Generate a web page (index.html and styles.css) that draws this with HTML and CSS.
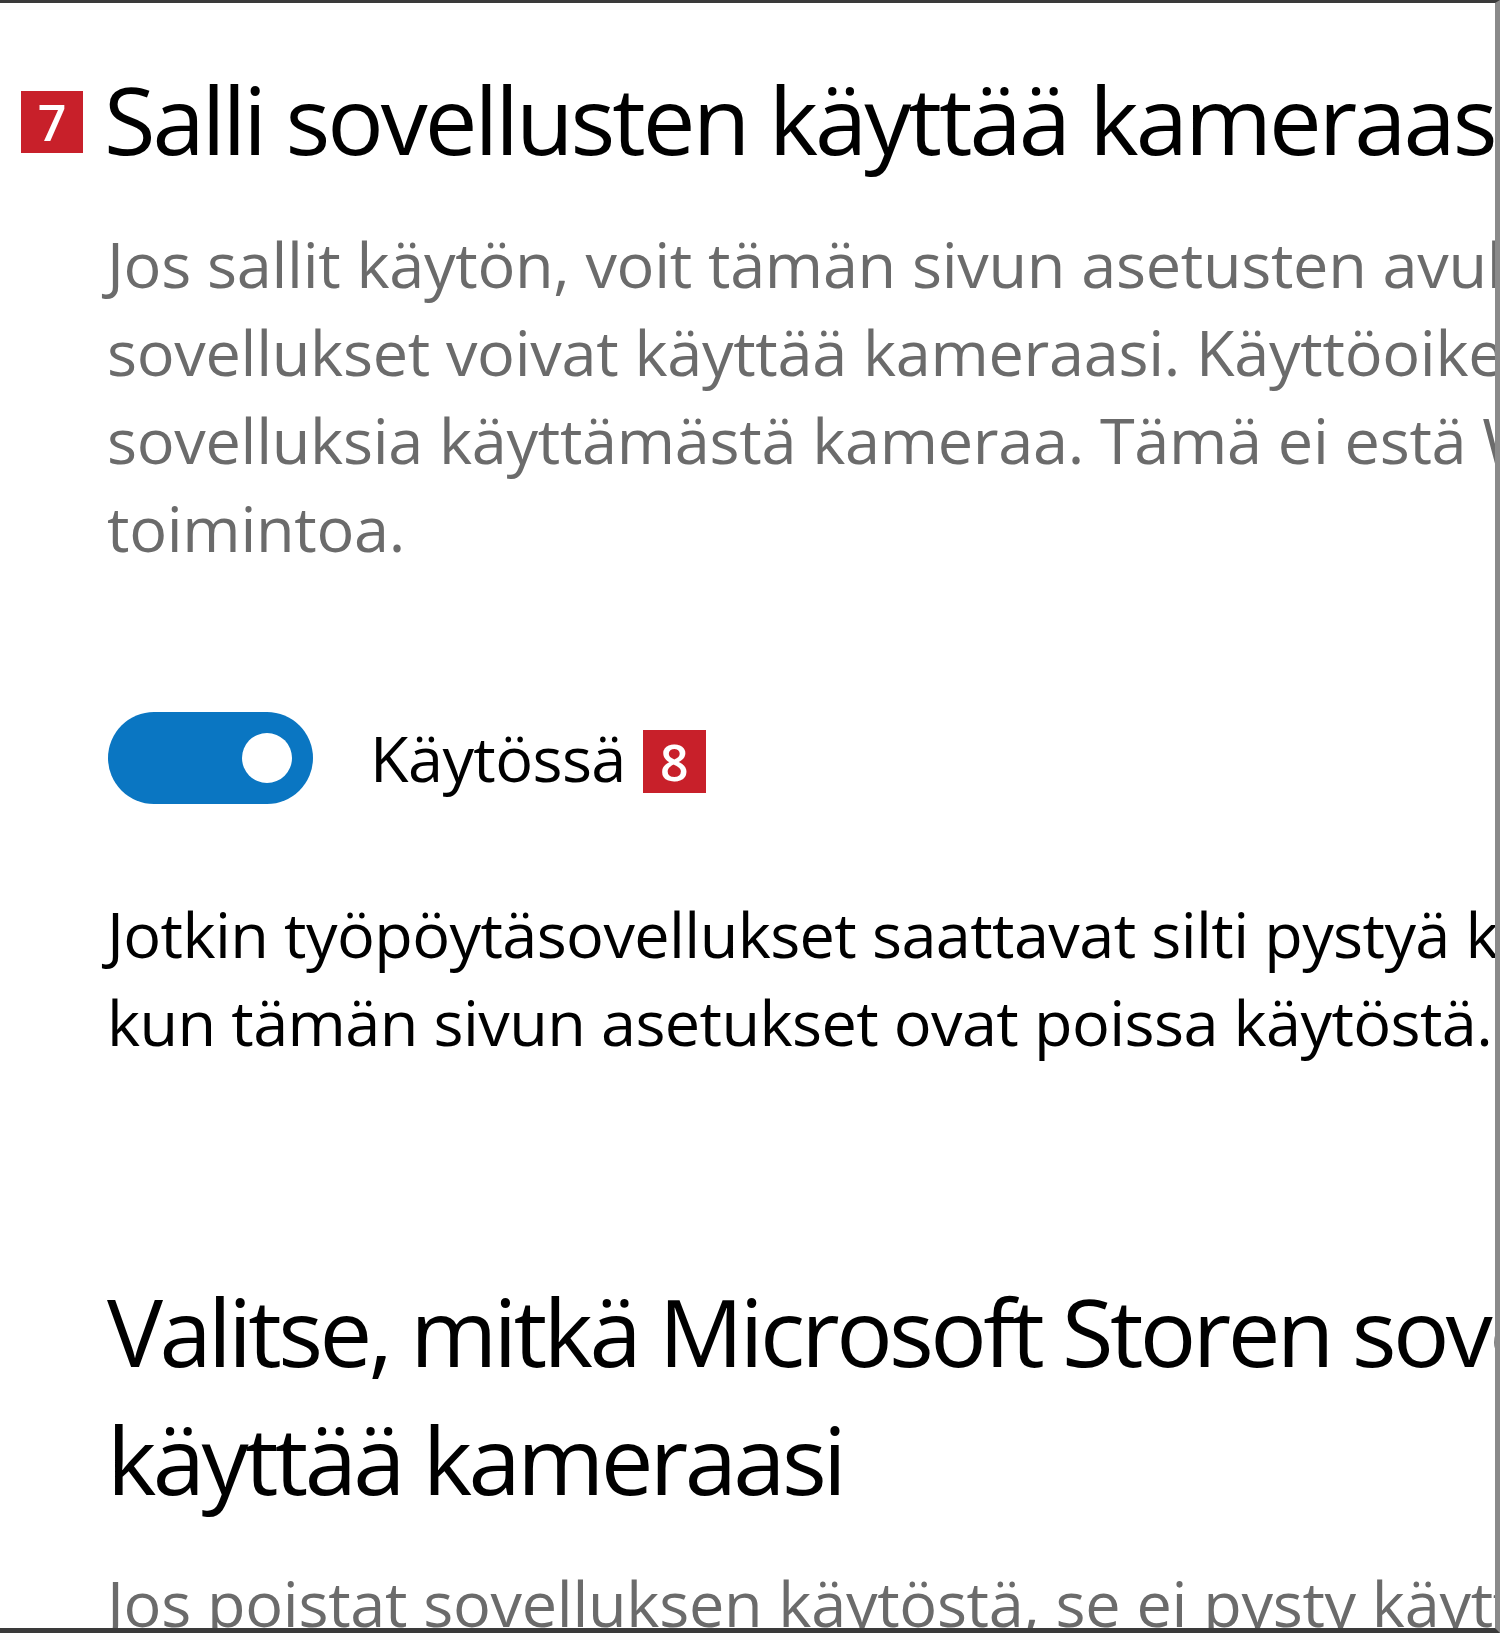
FILE: index.html
```html
<!DOCTYPE html>
<html lang="fi">
<head>
	<title>Kamera - Tietosuoja-asetukset</title>
	<meta charset="utf-8" />
	<link rel="stylesheet" href="styles.css">
</head>
<body>
	<div class="frame">
		<div class="panel">
			<h2 class="heading heading-marked"><span class="badge">7</span>Salli sovellusten käyttää kameraasi</h2>
			<p class="description">Jos sallit käytön, voit tämän sivun asetusten avulla valita, mitkä<br>sovellukset voivat käyttää kameraasi. Käyttöoikeuden estäminen estää<br>sovelluksia käyttämästä kameraa. Tämä ei estä Windows Hello -<br>toimintoa.</p>

			<div class="toggle-row">
				<span class="toggle toggle-on"><span class="knob"></span></span>
				<span class="toggle-label">Käytössä</span>
				<span class="badge badge-inline">8</span>
			</div>

			<p class="text">Jotkin työpöytäsovellukset saattavat silti pystyä käyttämään kameraasi,<br>kun tämän sivun asetukset ovat poissa käytöstä.</p>

			<h2 class="heading heading-second">Valitse, mitkä Microsoft Storen sovellukset voivat<br>käyttää kameraasi</h2>
			<p class="description description-last">Jos poistat sovelluksen käytöstä, se ei pysty käyttämään kameraasi suoraan.</p>
		</div>
	</div>
</body>
</html>
```

FILE: styles.css
```css
html, body {
	margin: 0;
	padding: 0;
	background-color: #fff;
}

body {
	font-family: "Open Sans", "Noto Sans", sans-serif;
	color: #000;
	overflow: hidden;
}

.frame {
	box-sizing: border-box;
	width: 1500px;
	height: 1633px;
	border-top: 3px solid #3a3a3a;
	border-right: 5px solid #8a8a8a;
	border-bottom: 5px solid #3a3a3a;
	overflow: hidden;
}

.panel {
	padding: 52px 0 0 107px;
	white-space: nowrap;
}

	.panel .heading {
		margin: 0;
		font-size: 94px;
		font-weight: 400;
		line-height: 128px;
		letter-spacing: -3px;
	}

	.panel .heading-marked {
		display: flex;
		align-items: center;
		margin-left: -86px;
	}

		.heading-marked .badge {
			margin-right: 21px;
			margin-top: 5px;
		}

	.panel .heading-second {
		margin-top: 201px;
		letter-spacing: -3.6px;
	}

	.panel .description {
		margin: 37px 0 0 0;
		font-size: 63px;
		line-height: 88px;
		letter-spacing: -0.3px;
		color: #6b6b6b;
	}

	.panel .description-last {
		margin-top: 36px;
	}

	.panel .text {
		margin: 86px 0 0 0;
		font-size: 63px;
		line-height: 88px;
		letter-spacing: -0.6px;
	}

.badge {
	display: inline-flex;
	align-items: center;
	justify-content: center;
	flex: none;
	width: 62px;
	height: 62px;
	background-color: #c8202a;
	color: #fff;
	font-family: "Open Sans", sans-serif;
	font-size: 50px;
	font-weight: 600;
	line-height: 1;
	letter-spacing: 0;
}

.toggle-row {
	display: flex;
	align-items: center;
	margin-top: 140px;
}

.toggle {
	box-sizing: border-box;
	display: flex;
	align-items: center;
	justify-content: flex-end;
	width: 205px;
	height: 92px;
	margin-left: 1px;
	padding-right: 21px;
	border-radius: 46px;
}

	.toggle.toggle-on {
		background-color: #0a76c2;
	}

	.toggle .knob {
		width: 50px;
		height: 50px;
		border-radius: 50%;
		background-color: #fff;
	}

.toggle-label {
	margin-left: 57px;
	font-size: 63px;
	line-height: 88px;
	letter-spacing: -0.6px;
	color: #000;
}

.badge-inline {
	margin-left: 17px;
	margin-top: 7px;
	width: 63px;
	height: 63px;
}
```
